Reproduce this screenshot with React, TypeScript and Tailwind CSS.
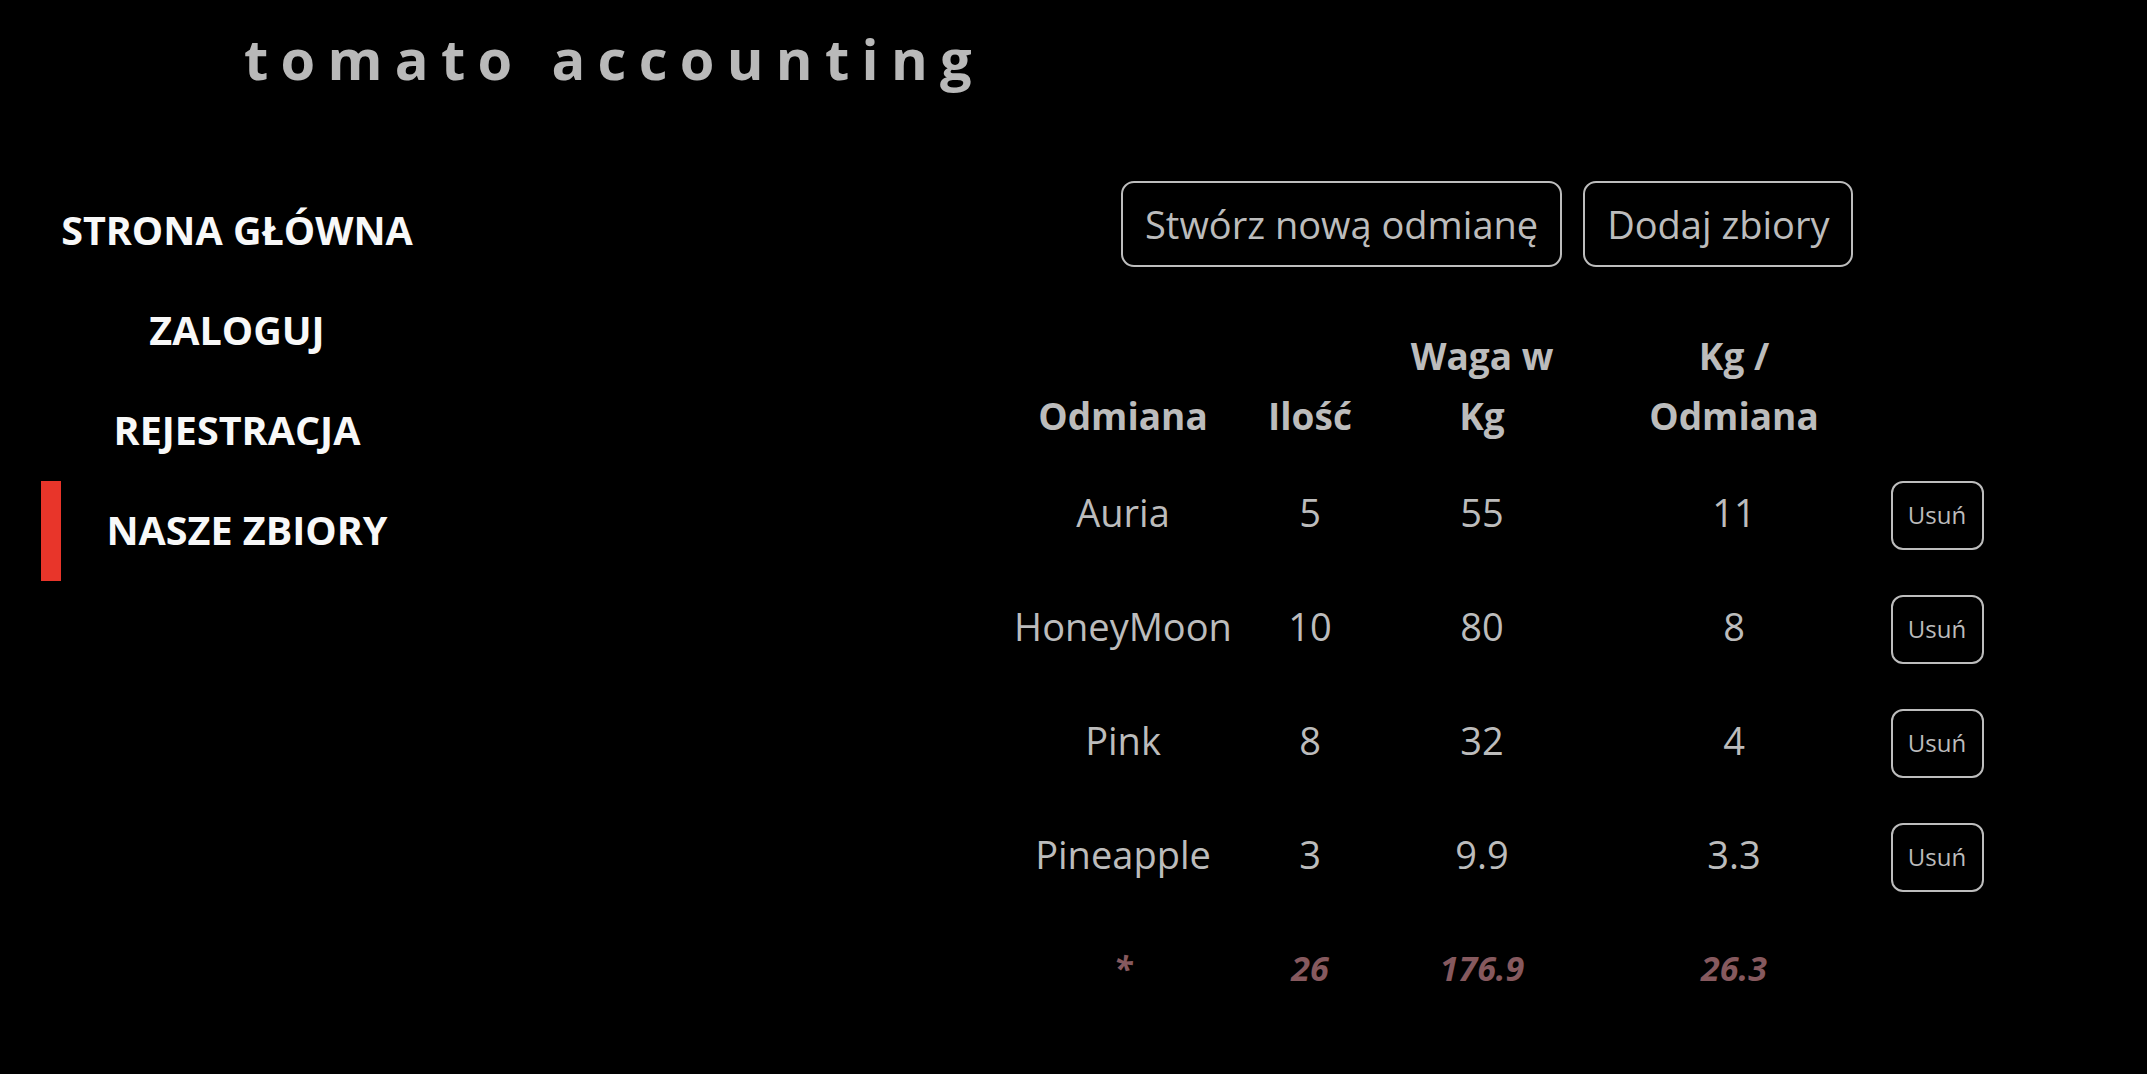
import React from "react";

const rows = [
  { name: "Auria", qty: "5", weight: "55", per: "11" },
  { name: "HoneyMoon", qty: "10", weight: "80", per: "8" },
  { name: "Pink", qty: "8", weight: "32", per: "4" },
  { name: "Pineapple", qty: "3", weight: "9.9", per: "3.3" },
];

const nav = ["STRONA GŁÓWNA", "ZALOGUJ", "REJESTRACJA", "NASZE ZBIORY"];

const grid = "grid grid-cols-[240px_134px_210px_294px_112px]";

export default function App() {
  return (
    <div
      className="min-h-[1074px] w-full bg-black"
      style={{ fontFamily: '"Open Sans", "Noto Sans", sans-serif' }}
    >
      <header className="pl-[244px] pt-[18px] h-[181px]">
        <h1 className="text-[56px] leading-[80px] font-bold tracking-[12.3px] text-[#b9b9b9]">
          tomato accounting
        </h1>
      </header>
      <div className="flex">
        <nav className="ml-[41px] w-[392px] flex flex-col">
          {nav.map((item, i) => (
            <a
              key={item}
              className={
                "h-[100px] flex items-center justify-center text-[39.5px] font-bold text-[#f8f8f8] " +
                (i === 3 ? "border-l-[20px] border-[#e8352a]" : "")
              }
            >
              {item}
            </a>
          ))}
        </nav>
        <main className="ml-[570px] flex flex-col">
          <div className="flex gap-[21px] ml-[118px]">
            <button className="h-[86px] px-[22px] rounded-[13px] border-2 border-[#bdbdbd] text-[38px] text-[#bcbcbc]">
              Stwórz nową odmianę
            </button>
            <button className="h-[86px] px-[22px] rounded-[13px] border-2 border-[#bdbdbd] text-[38px] text-[#bcbcbc]">
              Dodaj zbiory
            </button>
          </div>
          <div className={grid + " mt-[59px] text-[37px] font-bold leading-[60px] text-[#bcbcbc] items-end text-center"}>
            <div>Odmiana</div>
            <div>Ilość</div>
            <div>
              Waga w<br />Kg
            </div>
            <div>
              Kg /<br />Odmiana
            </div>
            <div></div>
          </div>
          <div className="mt-[9px] flex flex-col">
            {rows.map((r) => (
              <div key={r.name} className={grid + " h-[114px] items-center text-center text-[38px] text-[#bcbcbc]"}>
                <div>{r.name}</div>
                <div>{r.qty}</div>
                <div>{r.weight}</div>
                <div>{r.per}</div>
                <div className="flex justify-center">
                  <button className="mt-[6px] w-[93px] h-[69px] rounded-[12px] border-2 border-[#bdbdbd] text-[24px] text-[#bcbcbc]">
                    Usuń
                  </button>
                </div>
              </div>
            ))}
            <div className={grid + " h-[114px] items-center text-center text-[34px] font-bold italic text-[#86595e]"}>
              <div>*</div>
              <div>26</div>
              <div>176.9</div>
              <div>26.3</div>
              <div></div>
            </div>
          </div>
        </main>
      </div>
    </div>
  );
}
